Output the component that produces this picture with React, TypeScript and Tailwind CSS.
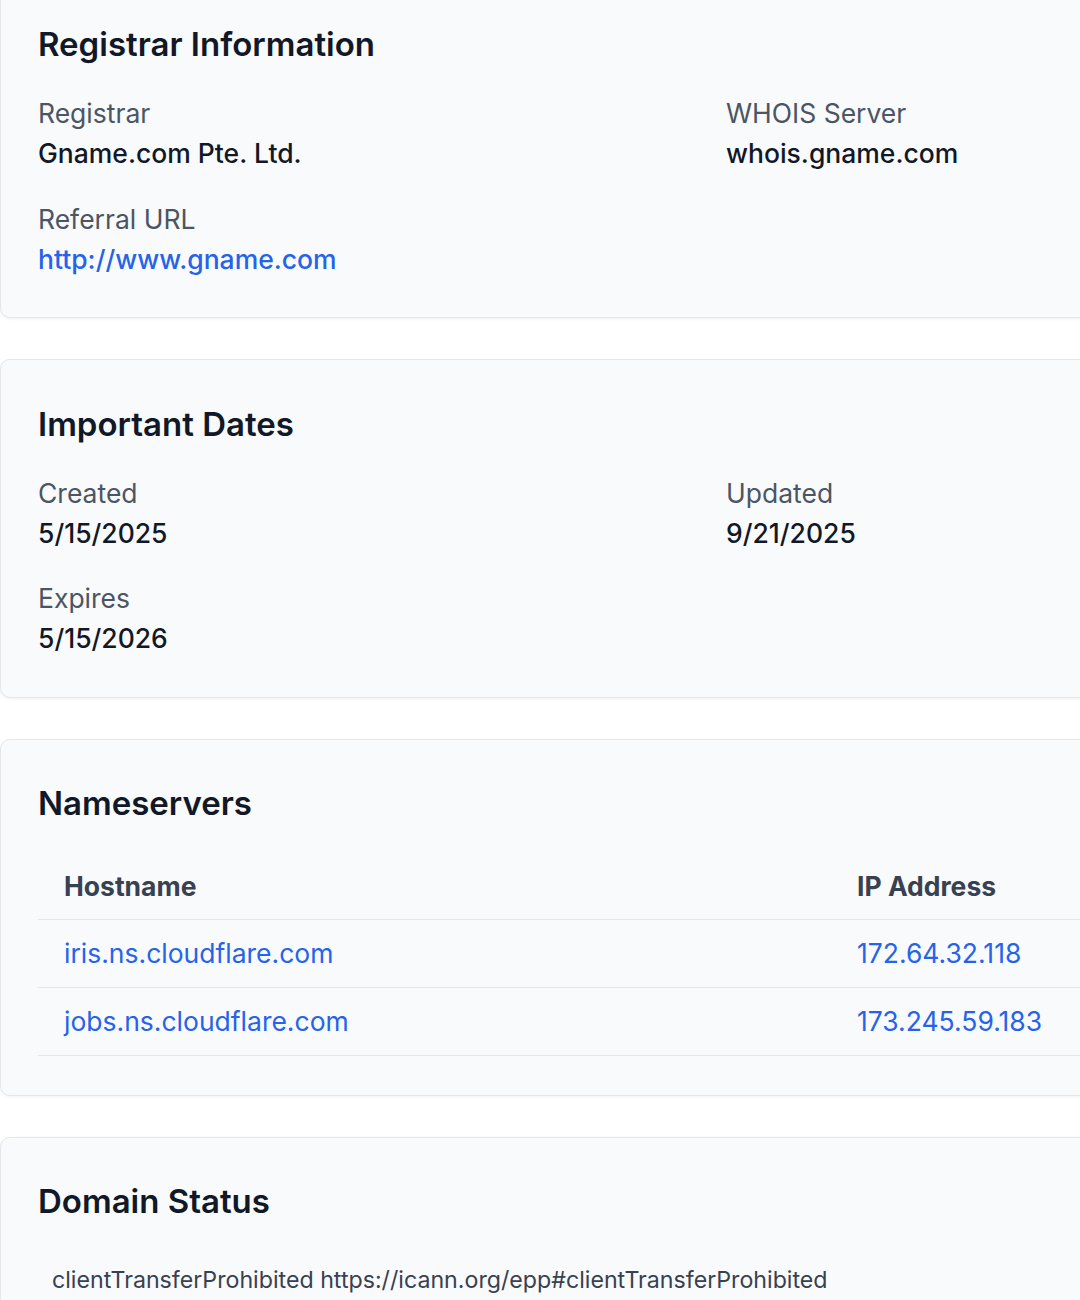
const registrar = [
  { label: "Registrar", value: "Gname.com Pte. Ltd." },
  { label: "WHOIS Server", value: "whois.gname.com" },
  { label: "Referral URL", value: "http://www.gname.com", link: true },
];

const dates = [
  { label: "Created", value: "5/15/2025" },
  { label: "Updated", value: "9/21/2025" },
  { label: "Expires", value: "5/15/2026" },
];

const nameservers = [
  { host: "iris.ns.cloudflare.com", ip: "172.64.32.118" },
  { host: "jobs.ns.cloudflare.com", ip: "173.245.59.183" },
];

function Card({
  title,
  tall,
  children,
}: {
  title: string;
  tall?: boolean;
  children: React.ReactNode;
}) {
  return (
    <section
      className={
        tall
          ? "w-[1400px] rounded-[10px] border border-[#e5e7eb] bg-[#f9fafb] px-[37px] pt-[42px] pb-[41px] shadow-[0_1px_3px_rgba(0,0,0,0.06)]"
          : "w-[1400px] rounded-[10px] border border-[#e5e7eb] bg-[#f9fafb] px-[37px] pt-[41px] pb-[40px] shadow-[0_1px_3px_rgba(0,0,0,0.06)]"
      }
    >
      <h2 className="text-[33px] leading-[45px] font-semibold text-[#111827]">{title}</h2>
      {children}
    </section>
  );
}

function Field({ label, value, link }: { label: string; value: string; link?: boolean }) {
  return (
    <div>
      <p className="text-[26.5px] leading-[36px] text-[#4b5563]">{label}</p>
      <p
        className={
          link
            ? "mt-[4px] text-[26.5px] leading-[36px] font-medium text-[#2563eb]"
            : "mt-[4px] text-[26.5px] leading-[36px] font-medium text-[#111827]"
        }
      >
        {value}
      </p>
    </div>
  );
}

export default function App() {
  return (
    <div className="w-full overflow-hidden bg-white" style={{ fontFamily: "Inter, 'Noto Sans', sans-serif" }}>
      <div className="-mt-[20px] flex flex-col gap-[41px] pb-10">
        <Card title="Registrar Information">
          <div className="mt-[28px] grid grid-cols-[650px_1fr] gap-x-[38px] gap-y-[30px]">
            {registrar.map((f) => (
              <Field key={f.label} {...f} />
            ))}
          </div>
        </Card>
        <Card title="Important Dates" tall>
          <div className="mt-[28px] grid grid-cols-[650px_1fr] gap-x-[38px] gap-y-[29px]">
            {dates.map((f) => (
              <Field key={f.label} {...f} />
            ))}
          </div>
        </Card>
        <Card title="Nameservers">
          <table className="mt-[27px] mb-[-1px] w-full border-collapse text-left">
            <thead>
              <tr className="border-b border-[#e5e7eb]">
                <th className="w-[793px] px-[26px] py-[15px] text-[26.5px] leading-[36px] font-bold text-[#374151]">
                  Hostname
                </th>
                <th className="px-[26px] py-[15px] text-[26.5px] leading-[36px] font-bold text-[#374151]">
                  IP Address
                </th>
              </tr>
            </thead>
            <tbody>
              {nameservers.map((ns) => (
                <tr key={ns.host} className="border-b border-[#e5e7eb]">
                  <td className="px-[26px] py-[16px] text-[26.5px] leading-[35px] text-[#2563eb]">{ns.host}</td>
                  <td className="px-[26px] py-[16px] text-[26.5px] leading-[35px] text-[#2563eb]">{ns.ip}</td>
                </tr>
              ))}
            </tbody>
          </table>
        </Card>
        <Card title="Domain Status">
          <div className="mt-[40px] px-[14px]">
            <p className="text-[23.2px] leading-[33px] text-[#374151]">
              clientTransferProhibited https://icann.org/epp#clientTransferProhibited
            </p>
          </div>
        </Card>
      </div>
    </div>
  );
}
